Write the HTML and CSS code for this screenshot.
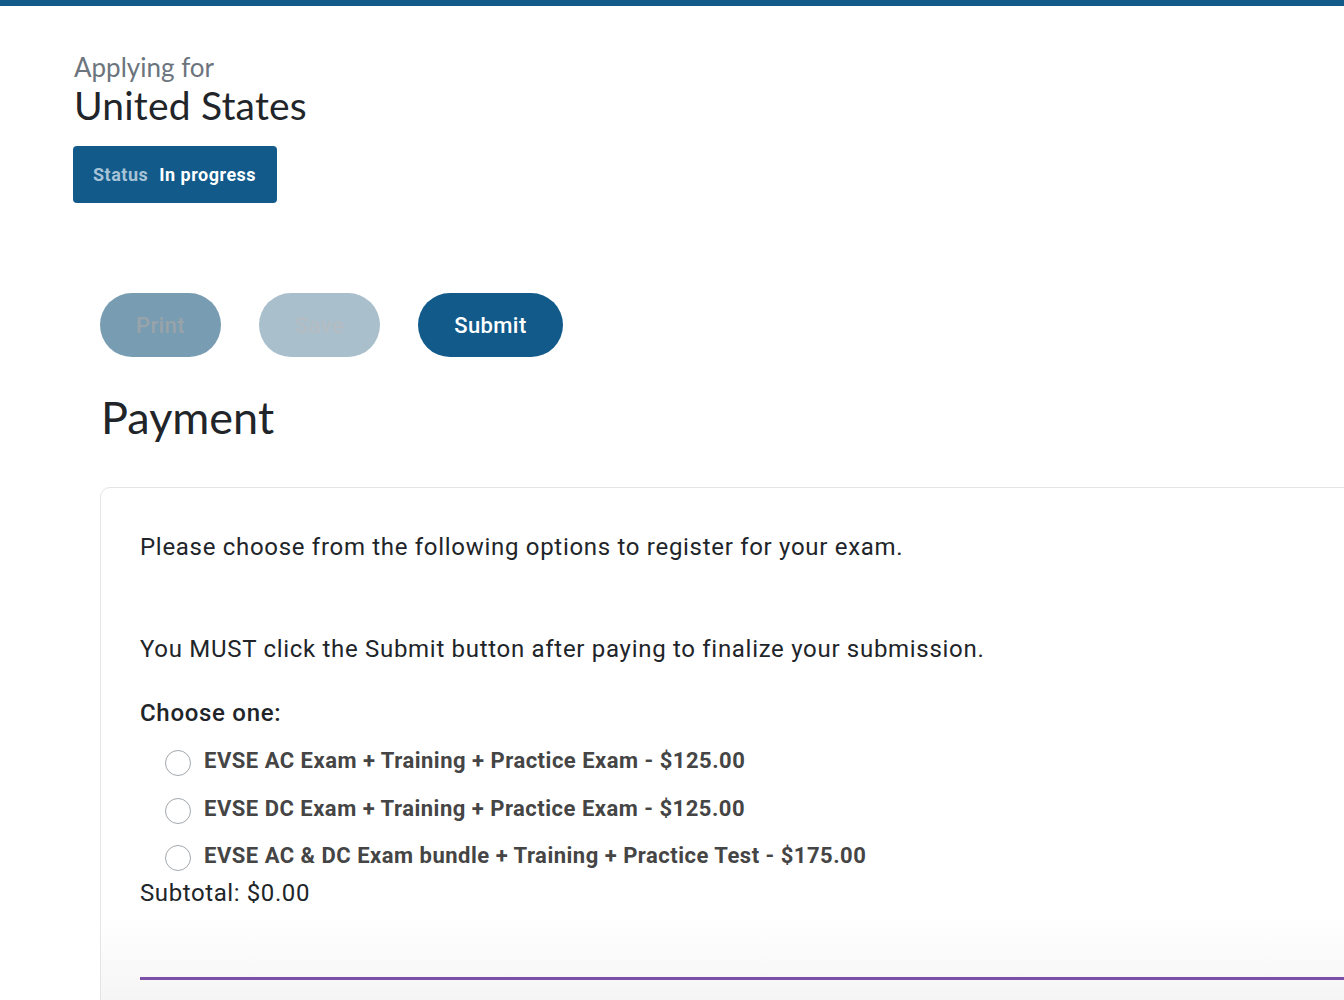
FILE: index.html
```html
<!DOCTYPE html>
<html lang="en">
<head>
<meta charset="UTF-8">
<meta name="viewport" content="width=device-width, initial-scale=1.0">
<title>Application — Payment</title>
<link rel="stylesheet" href="styles.css">
</head>
<body>

<div class="topbar"></div>

<main class="page">

  <!-- header -->
  <header class="apply">
    <p class="apply-for">Applying for</p>
    <h1 class="country">United States</h1>
    <div class="status"><span class="status-label">Status</span><span class="status-value">In progress</span></div>
  </header>

  <!-- actions -->
  <div class="actions">
    <button class="btn btn--print" disabled>Print</button>
    <button class="btn btn--save" disabled>Save</button>
    <button class="btn btn--submit">Submit</button>
  </div>

  <h2 class="section-title">Payment</h2>

  <section class="card">
    <p class="lead">Please choose from the following options to register for your exam.</p>
    <p class="lead lead--must">You MUST click the Submit button after paying to finalize your submission.</p>

    <fieldset class="choices">
      <legend>Choose one:</legend>
      <label class="choice"><span class="radio"></span>EVSE AC Exam + Training + Practice Exam - $125.00</label>
      <label class="choice"><span class="radio"></span>EVSE DC Exam + Training + Practice Exam - $125.00</label>
      <label class="choice"><span class="radio"></span>EVSE AC &amp; DC Exam bundle + Training + Practice Test - $175.00</label>
    </fieldset>
    <p class="subtotal">Subtotal: $0.00</p>

    <div class="rule"></div>
  </section>

</main>

</body>
</html>
```

FILE: styles.css
```css
:root {
  --blue: #115a8a;
  --ink: #212529;
  --grey: #6c757d;
  --line: #e4e4e4;
  --purple: #7b4ea8;
}
* { margin: 0; padding: 0; box-sizing: border-box; }
html, body { overflow-x: hidden; }
body {
  background: #fff;
  color: var(--ink);
  font-family: Roboto, "Liberation Sans", sans-serif;
}

.topbar { height: 6px; background: var(--blue); }

.page { padding: 0 0 0 73px; }

/* ---------- header ---------- */
.apply { padding-top: 46px; }
.apply-for {
  font-family: Lato, "Open Sans", sans-serif;
  font-size: 26px;
  line-height: 30px;
  color: var(--grey);
  padding-left: 1px;
}
.country {
  font-family: Lato, "Open Sans", sans-serif;
  font-weight: 400;
  font-size: 39px;
  line-height: 46px;
  letter-spacing: 0.2px;
  color: var(--ink);
  padding-left: 1px;
}
.status {
  display: inline-flex;
  align-items: center;
  gap: 11px;
  height: 57px;
  margin-top: 18px;
  padding: 0 21px 0 20px;
  background: var(--blue);
  border-radius: 4px;
  font-size: 18px;
  font-weight: 700;
  letter-spacing: 0.5px;
}
.status-label { color: #a7c3d7; }
.status-value { color: #fff; }

/* ---------- buttons ---------- */
.actions {
  display: flex;
  gap: 38px;
  margin-top: 90px;
  padding-left: 27px;
}
.btn {
  height: 64px;
  border: none;
  border-radius: 32px;
  font-family: Roboto, "Liberation Sans", sans-serif;
  font-size: 22px;
  font-weight: 500;
  letter-spacing: 0.4px;
  padding: 0 36px;
  min-width: 121px;
}
.btn--print { background: #789cb1; color: #98a3aa; }
.btn--save { background: #a9bfcc; color: #b3bcc2; }
.btn--submit { background: var(--blue); color: #fff; }

.section-title {
  font-family: Lato, "Open Sans", sans-serif;
  font-weight: 400;
  font-size: 45px;
  line-height: 56px;
  margin: 32px 0 0 28px;
  color: var(--ink);
}

/* ---------- card ---------- */
.card {
  margin: 42px 0 0 27px;
  width: 1320px;
  border: 1px solid var(--line);
  border-radius: 10px 0 0 0;
  padding: 43px 0 40px 39px;
  background: linear-gradient(to bottom, #fff 0, #fff 430px, #f4f4f4 520px);
}
.lead {
  font-size: 24px;
  line-height: 32px;
  letter-spacing: 0.7px;
  color: var(--ink);
}
.lead--must { margin-top: 70px; }

.choices { border: none; margin-top: 32px; }
.choices legend {
  font-size: 24px;
  font-weight: 500;
  line-height: 32px;
  letter-spacing: 0.7px;
  color: var(--ink);
  margin-bottom: 8px;
}
.choice {
  display: flex;
  align-items: center;
  gap: 13px;
  padding-left: 25px;
  height: 47.5px;
  font-size: 22px;
  font-weight: 700;
  letter-spacing: 0.5px;
  color: #454545;
}
.radio {
  width: 26px;
  height: 26px;
  border: 1px solid #a3a8ad;
  border-radius: 50%;
  background: #fff;
  margin-top: 5px;
  flex: none;
}
.subtotal {
  font-size: 24px;
  line-height: 32px;
  letter-spacing: 0.6px;
  margin-top: -3px;
}
.rule {
  height: 3px;
  background: var(--purple);
  margin-top: 68px;
}
```
